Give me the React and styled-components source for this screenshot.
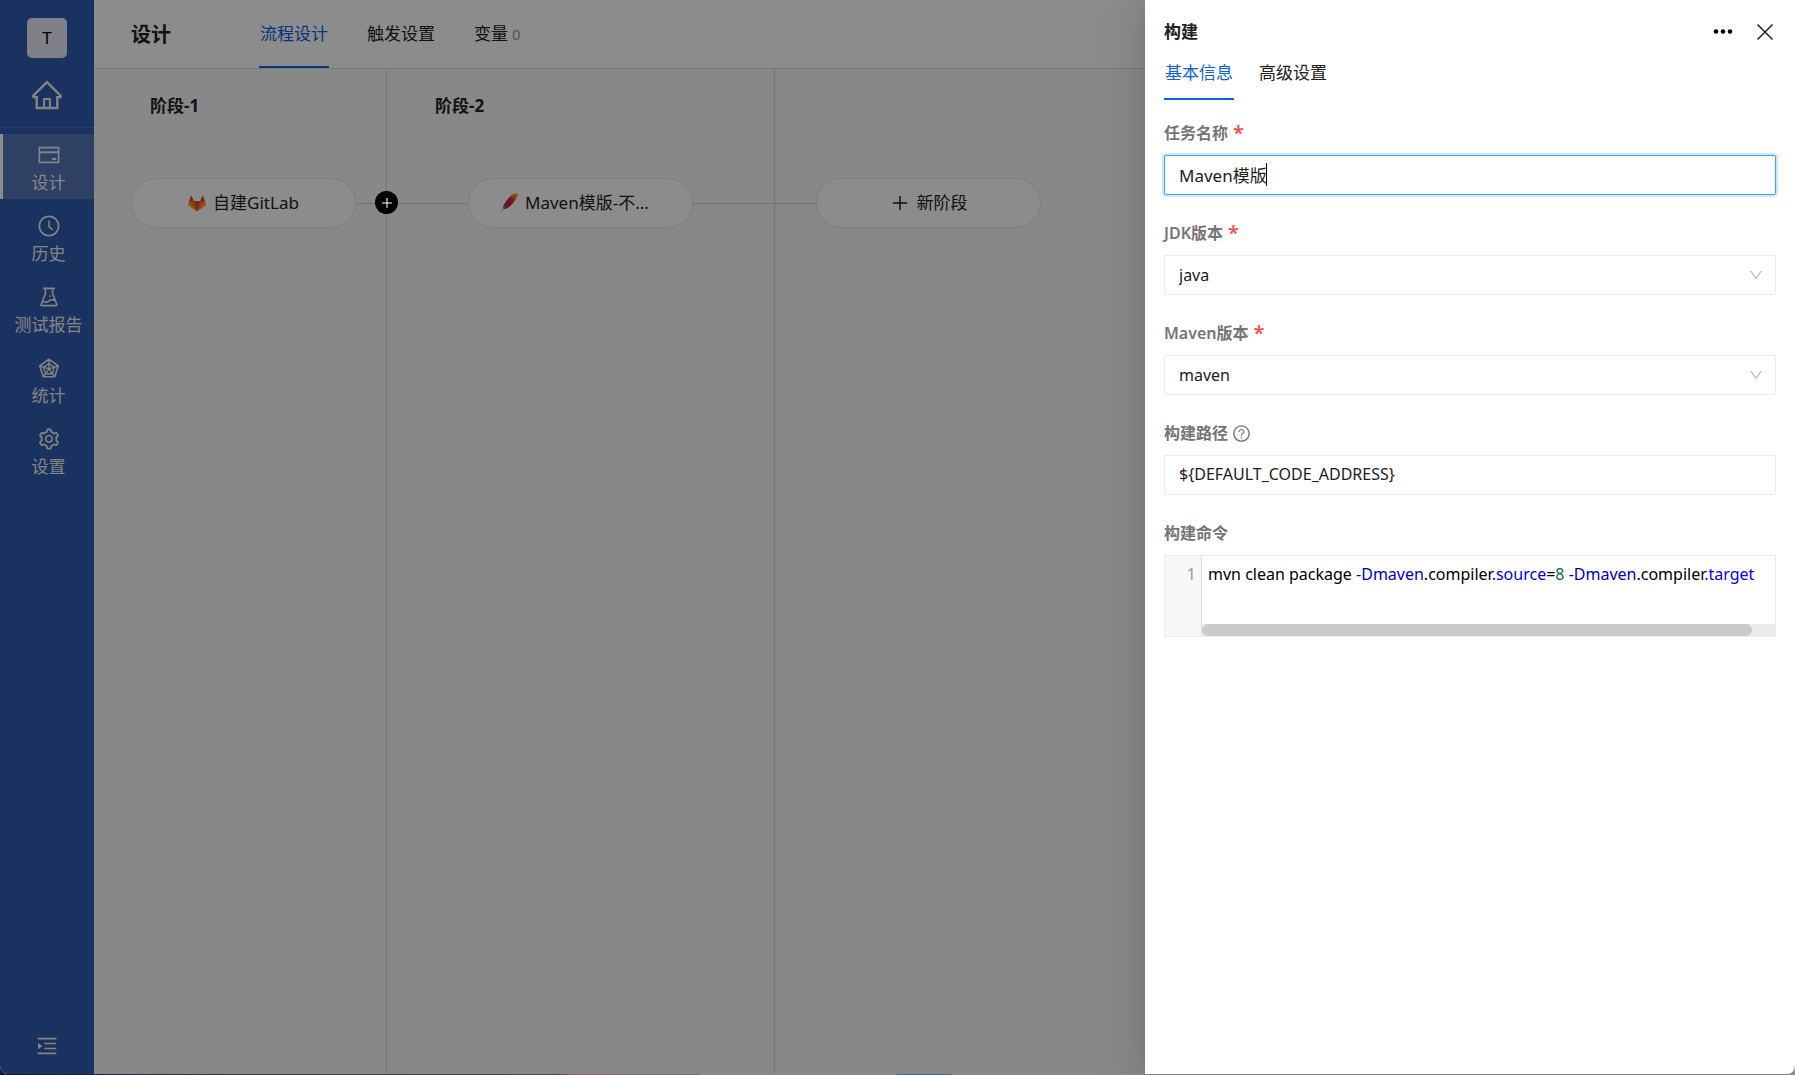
import React, { useState } from 'react';
import styled, { createGlobalStyle } from 'styled-components';
import {
  AiOutlineClockCircle,
  AiOutlineCreditCard,
  AiOutlineDown,
  AiOutlineExperiment,
  AiOutlineHome,
  AiOutlineMenuUnfold,
  AiOutlinePlus,
  AiOutlineQuestionCircle,
  AiOutlineRadarChart,
  AiOutlineSetting,
} from 'react-icons/ai';

const GlobalStyle = createGlobalStyle`
  * {
    box-sizing: border-box;
  }
  body {
    margin: 0;
    font-family: 'Noto Sans', 'Noto Sans CJK SC', sans-serif;
    font-size: 17px;
    line-height: 24px;
    color: #212121;
  }
  button, input, select {
    font: inherit;
    color: inherit;
  }
  button {
    padding: 0;
    border: none;
    background: none;
    cursor: pointer;
  }
  svg {
    display: block;
    flex: none;
  }
`;

const Desktop = styled.div`
  height: 100vh;
  padding-bottom: 1px;
  background: linear-gradient(to right, #1c1238 0, #46364f 15%, #5a4254 31%, #9a6462 32%, #76688c 39%, #8f8888 39%, #8f8888 50%, #3a6a9a 50%, #3a6a9a 53%, #8f8888 53%);
`;

const Window = styled.div`
  position: relative;
  display: flex;
  height: 100%;
  overflow: hidden;
  border-radius: 0 0 8px 8px;
  background: #f7f7f7;
`;

const Mask = styled.div`
  position: absolute;
  inset: 0;
  background: rgba(0, 0, 0, 0.45);
`;

const Sidebar = styled.nav`
  display: flex;
  flex-direction: column;
  flex: none;
  width: 94px;
  background: #2f5cae;
  color: #f0f0f0;
`;

const SidebarTop = styled.div`
  display: flex;
  flex-direction: column;
  align-items: center;
  gap: 20px;
  height: 128px;
  padding-top: 18px;
  margin-bottom: 6px;
  border-bottom: 1px solid #4a70b8;
`;

const Avatar = styled.div`
  width: 40px;
  height: 40px;
  border-radius: 5px;
  background: #e9e9f8;
  color: #000;
  line-height: 40px;
  text-align: center;
`;

const MenuItem = styled.button`
  display: flex;
  flex-direction: column;
  align-items: center;
  gap: 4px;
  height: 65px;
  margin-bottom: 6px;
  padding-top: 9px;
  border-left: 3px solid ${props => props.$active ? '#fff' : 'transparent'};
  background: ${props => props.$active ? '#5577b8' : 'none'};
  white-space: nowrap;
`;

const Collapse = styled.button`
  display: flex;
  justify-content: center;
  margin: auto 0 16px;
`;

const Main = styled.main`
  display: flex;
  flex-direction: column;
  flex: 1;
  min-width: 0;
`;

const Header = styled.header`
  display: flex;
  flex: none;
  align-items: stretch;
  height: 69px;
  padding-left: 37px;
  border-bottom: 1px solid #dadada;
  background: #fff;
`;

const Title = styled.h1`
  width: 128px;
  margin: 0;
  font-size: 20px;
  line-height: 70px;
`;

const Tabs = styled.div`
  display: flex;
  gap: ${props => props.$gap}px;
`;

const Tab = styled.button`
  padding: 0 1px;
  border-top: 2px solid transparent;
  border-bottom: 2px solid ${props => props.$active ? '#0a61e6' : 'transparent'};
  color: ${props => props.$active ? '#0a61e6' : 'inherit'};
`;

const Count = styled.span`
  margin-left: 4px;
  font-size: 15px;
  color: #999;
`;

const Board = styled.div`
  display: flex;
  flex: 1;
`;

const Stage = styled.section`
  position: relative;
  flex: ${props => props.$width ? `0 0 ${props.$width}px` : '1'};
  border-right: ${props => props.$width ? '1px solid #d6d6d6' : 'none'};
`;

const StageName = styled.h2`
  height: 109px;
  margin: 0;
  padding: 25px 0 0 ${props => props.$indent}px;
  font-size: 17px;
  line-height: 24px;
`;

const Flow = styled.div`
  display: flex;
  align-items: center;
  height: 50px;
`;

const Link = styled.span`
  flex: 0 0 ${props => props.$width}px;
  height: 1px;
  background: ${props => props.$blank ? 'none' : '#cfcfcf'};
`;

const Task = styled.button`
  display: flex;
  flex: 0 0 225px;
  align-items: center;
  justify-content: center;
  gap: 7px;
  height: 50px;
  border: 1px solid #e6e6e6;
  border-radius: 25px;
  background: #fff;
  white-space: nowrap;
`;

const TaskName = styled.span`
  width: ${props => props.$width}px;
  text-align: left;
`;

const AddTask = styled.button`
  position: absolute;
  top: 122px;
  right: -12px;
  display: grid;
  place-items: center;
  width: 23px;
  height: 23px;
  z-index: 1;
  border-radius: 50%;
  background: #000;
  color: #fff;
`;

const Drawer = styled.aside`
  position: absolute;
  top: 0;
  right: 0;
  bottom: 0;
  width: 650px;
  padding: 18px 19px;
  background: #fff;
  box-shadow: -6px 0 16px -8px rgba(0, 0, 0, 0.08), -9px 0 28px rgba(0, 0, 0, 0.05), -12px 0 48px 16px rgba(0, 0, 0, 0.03);
`;

const DrawerHeader = styled.div`
  display: flex;
  align-items: center;
  gap: 22px;
  height: 28px;
  padding-right: 1px;
`;

const DrawerTitle = styled.h2`
  flex: 1;
  margin: 0;
  font-size: 17px;
  line-height: 28px;
`;

const DrawerTabs = styled(Tabs)`
  height: 46px;
  margin: 8px 0 21px;

  button {
    padding-bottom: 8px;
  }
`;

const Field = styled.div`
  position: relative;
  margin-bottom: 26px;
`;

const Label = styled.label`
  display: flex;
  align-items: center;
  gap: 4px;
  height: 24px;
  margin-bottom: 10px;
  font-size: 16px;
  font-weight: 600;
  color: #757575;
`;

const Star = styled.span`
  margin-left: 1px;
  font-size: 20px;
  color: #ff4d4f;
`;

const Input = styled.input`
  display: block;
  width: 100%;
  height: 40px;
  padding: 0 14px 2px;
  border: 1px solid ${props => props.$focused ? '#40a0ff' : '#ebebeb'};
  border-radius: 2px;
  outline: none;
  box-shadow: ${props => props.$focused ? '0 0 0 2px rgba(24, 144, 255, 0.2)' : 'none'};
  background: #fff;
  font-size: ${props => props.$focused ? 17 : 16}px;
`;

const Caret = styled.i`
  position: absolute;
  left: 102px;
  bottom: 9px;
  width: 1px;
  height: 23px;
  background: #000;
`;

const Select = styled.select`
  display: block;
  width: 100%;
  height: 40px;
  padding: 0 14px;
  border: 1px solid #ebebeb;
  border-radius: 2px;
  appearance: none;
  background: #fff;
  font-size: 16px;
`;

const SelectArrow = styled(AiOutlineDown)`
  position: absolute;
  right: 12px;
  bottom: 12px;
  color: #bfbfbf;
  pointer-events: none;
`;

const Editor = styled.div`
  display: flex;
  height: 82px;
  border: 1px solid #ebebeb;
`;

const Gutter = styled.div`
  width: 37px;
  padding: 6px 5px 0 0;
  border-right: 1px solid #ddd;
  background: #f7f7f7;
  color: #999;
  font-size: 16px;
  text-align: right;
`;

const CodePane = styled.div`
  display: flex;
  flex: 1;
  flex-direction: column;
  justify-content: space-between;
  min-width: 0;
`;

const Code = styled.pre`
  margin: 0;
  padding: 6px 0 0 6px;
  overflow: hidden;
  outline: none;
  font-family: inherit;
  font-size: 16px;
  color: #000;
`;

const Token = styled.span`
  color: ${props => props.$color};
`;

const ScrollTrack = styled.div`
  height: 12px;
  background: #ebebeb;
`;

const ScrollThumb = styled.div`
  width: 96%;
  height: 100%;
  border-radius: 6px;
  background: #cacaca;
`;

const menu = [
  ['设计', AiOutlineCreditCard],
  ['历史', AiOutlineClockCircle],
  ['测试报告', AiOutlineExperiment],
  ['统计', AiOutlineRadarChart],
  ['设置', AiOutlineSetting],
];

const GitlabLogo = () => (
  <svg width="18" height="17" viewBox="0 0 18 17">
    <path d="M9 16.5 0.6 10.3 0.3 8.6 3.2 0.5 5.8 6.3h6.4L14.8 0.5l2.9 8.1-.3 1.7z" fill="#fc6d26" />
    <path d="M9 16.5 5.8 6.3h6.4z" fill="#e24329" />
    <path d="M3.2 0.5 1.2 6.3h4.6zM14.8 0.5l2 5.8h-4.6z" fill="#e24329" />
    <path d="M1.2 6.3 0.3 8.8c-.2.7 0 1.2.4 1.6L9 16.5zM16.8 6.3l.9 2.5c.2.7 0 1.2-.4 1.6L9 16.5z" fill="#fca326" />
  </svg>
);

const MavenLogo = () => (
  <svg width="18" height="20" viewBox="0 0 18 20">
    <defs>
      <linearGradient id="feather" x1="1" y1="0" x2="0" y2="1">
        <stop offset="0" stopColor="#f69923" />
        <stop offset="0.2" stopColor="#f08a2c" />
        <stop offset="0.4" stopColor="#d62a3c" />
        <stop offset="0.65" stopColor="#be2052" />
        <stop offset="1" stopColor="#7e2f8a" />
      </linearGradient>
    </defs>
    <path d="M17.6.6C14.800-.6 10.300 2.800 7.200 6.800 4.500 10.300 2.400 13.500 2.800 16c2.800.4 6.100-1.300 9-4.600C15 7.700 18.800 2.500 17.600.6z" fill="url(#feather)" />
    <path d="M4.500 13.500C3 15.500 1.800 17.500.8 19.600" fill="none" stroke="#c9b3d8" strokeWidth="1" />
  </svg>
);

const MoreIcon = () => (
  <svg width="20" height="20" viewBox="0 0 20 20" fill="#000">
    <circle cx="3" cy="9.500" r="2.300" />
    <circle cx="10" cy="9.500" r="2.300" />
    <circle cx="17" cy="9.500" r="2.300" />
  </svg>
);

const CloseIcon = () => (
  <svg width="20" height="20" viewBox="0 0 20 20" fill="none" stroke="#212121" strokeWidth="1.500">
    <path d="M2.500 2.500l15 15M17.500 2.500l-15 15" />
  </svg>
);

function App() {
  const [name, setName] = useState('Maven模版');
  const [path, setPath] = useState('${DEFAULT_CODE_ADDRESS}');
  const [current, setCurrent] = useState('设计');

  return (
    <Desktop>
      <GlobalStyle />
      <Window>
        <Sidebar>
          <SidebarTop>
            <Avatar>T</Avatar>
            <AiOutlineHome size={34} />
          </SidebarTop>
          {menu.map(([text, Icon]) => (
            <MenuItem key={text} $active={text === current} onClick={() => setCurrent(text)}>
              <Icon size={24} />
              {text}
            </MenuItem>
          ))}
          <Collapse aria-label="展开菜单"><AiOutlineMenuUnfold size={24} /></Collapse>
        </Sidebar>

        <Main>
          <Header>
            <Title>设计</Title>
            <Tabs $gap={37}>
              <Tab $active>流程设计</Tab>
              <Tab>触发设置</Tab>
              <Tab>变量<Count>0</Count></Tab>
            </Tabs>
          </Header>
          <Board>
            <Stage $width={293}>
              <StageName $indent={56}>阶段-1</StageName>
              <Flow>
                <Link $width={37} $blank />
                <Task><GitlabLogo />自建GitLab</Task>
                <Link $width={30} />
              </Flow>
              <AddTask aria-label="添加任务"><AiOutlinePlus size={14} /></AddTask>
            </Stage>
            <Stage $width={388}>
              <StageName $indent={48}>阶段-2</StageName>
              <Flow>
                <Link $width={81} />
                <Task><MavenLogo /><TaskName $width={136}>Maven模版-不...</TaskName></Task>
                <Link $width={81} />
              </Flow>
            </Stage>
            <Stage>
              <StageName />
              <Flow>
                <Link $width={41} />
                <Task><AiOutlinePlus size={20} />新阶段</Task>
              </Flow>
            </Stage>
          </Board>
        </Main>

        <Mask />

        <Drawer>
          <DrawerHeader>
            <DrawerTitle>构建</DrawerTitle>
            <button aria-label="更多"><MoreIcon /></button>
            <button aria-label="关闭"><CloseIcon /></button>
          </DrawerHeader>
          <DrawerTabs $gap={24}>
            <Tab $active>基本信息</Tab>
            <Tab>高级设置</Tab>
          </DrawerTabs>
          <Field>
            <Label htmlFor="name">任务名称<Star>*</Star></Label>
            <Input id="name" $focused value={name} onChange={e => setName(e.target.value)} />
            <Caret />
          </Field>
          <Field>
            <Label htmlFor="jdk">JDK版本<Star>*</Star></Label>
            <Select id="jdk"><option>java</option></Select>
            <SelectArrow size={16} />
          </Field>
          <Field>
            <Label htmlFor="maven">Maven版本<Star>*</Star></Label>
            <Select id="maven"><option>maven</option></Select>
            <SelectArrow size={16} />
          </Field>
          <Field>
            <Label htmlFor="path">构建路径<AiOutlineQuestionCircle size={19} /></Label>
            <Input id="path" value={path} onChange={e => setPath(e.target.value)} />
          </Field>
          <Field>
            <Label as="div" id="command">构建命令</Label>
            <Editor>
              <Gutter>1</Gutter>
              <CodePane>
                <Code role="textbox" aria-labelledby="command" contentEditable suppressContentEditableWarning>
                  mvn clean package <Token $color="#0000cc">-Dmaven</Token>.compiler<Token $color="#0000ff">.source</Token>=<Token $color="#116644">8</Token> <Token $color="#0000cc">-Dmaven</Token>.compiler<Token $color="#0000ff">.target</Token>
                </Code>
                <ScrollTrack><ScrollThumb /></ScrollTrack>
              </CodePane>
            </Editor>
          </Field>
        </Drawer>
      </Window>
    </Desktop>
  );
}

export default App;
